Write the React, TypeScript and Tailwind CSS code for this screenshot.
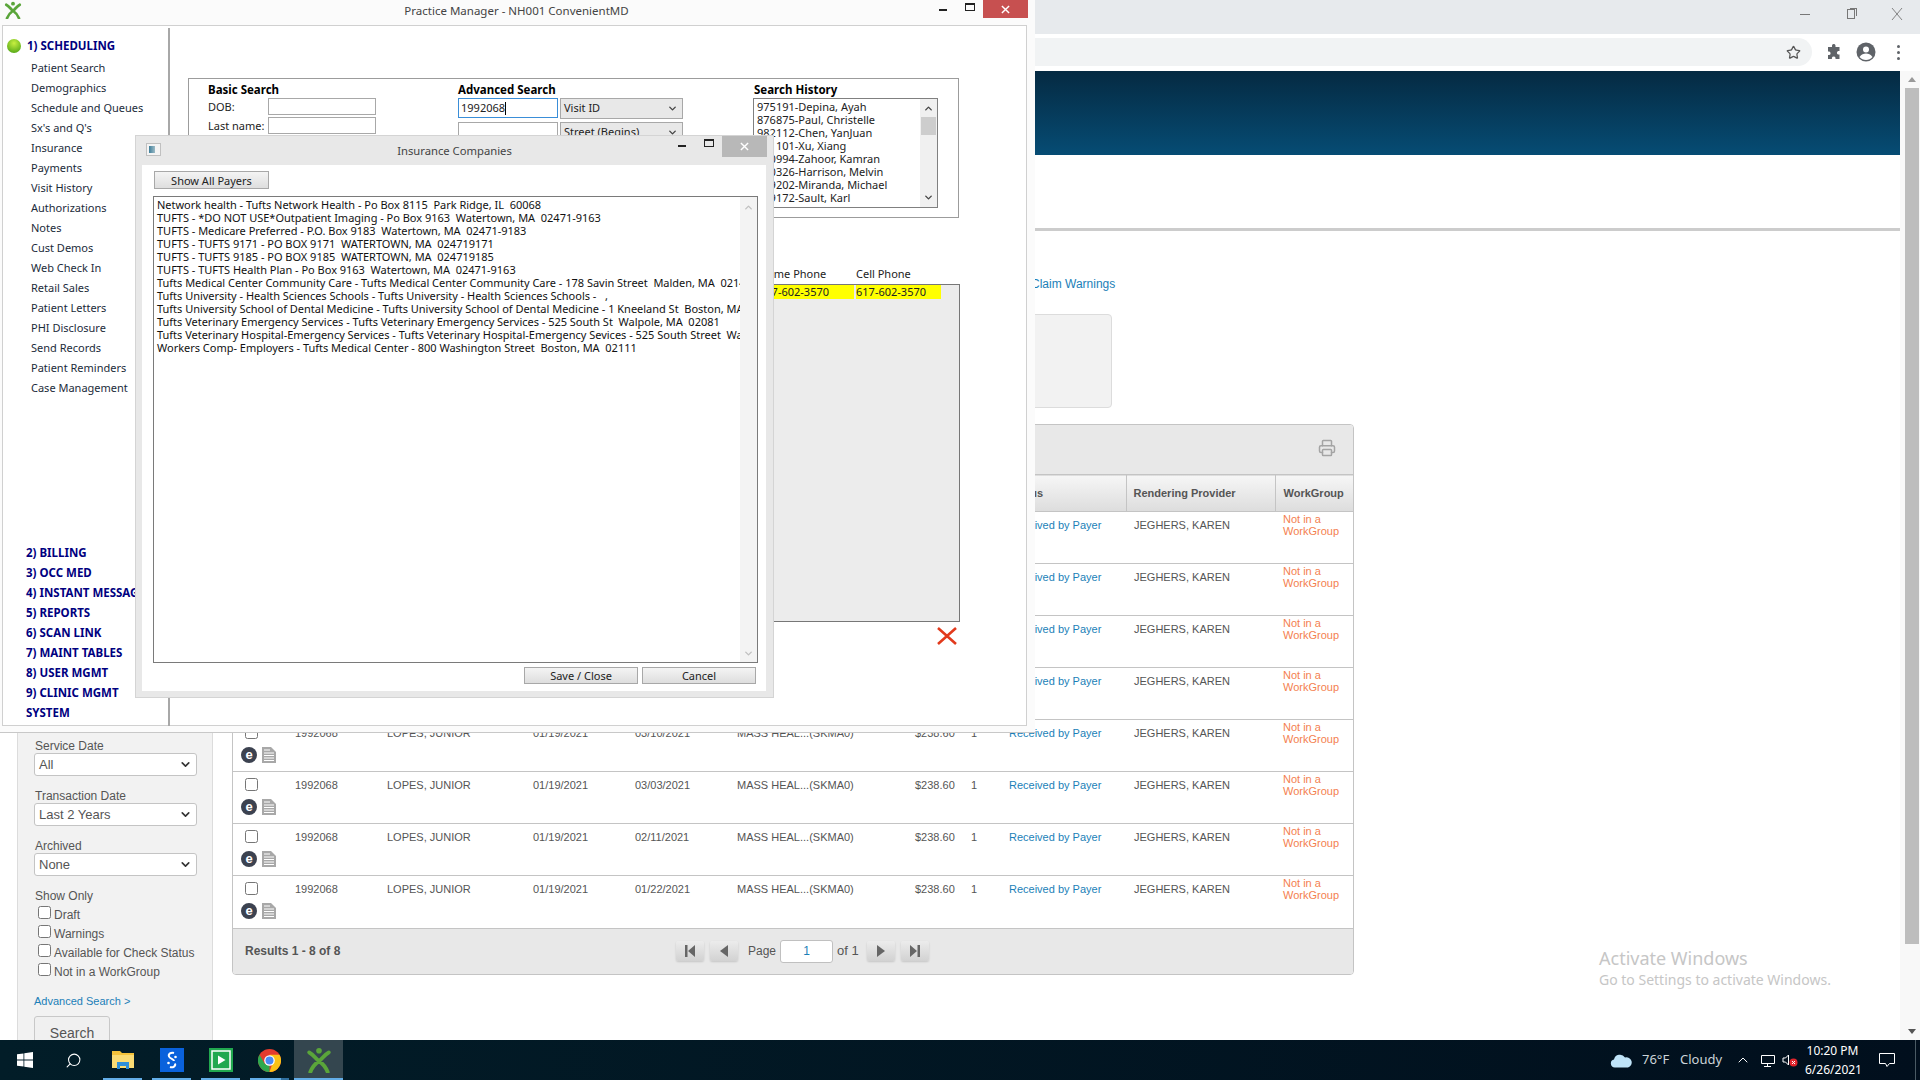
import React from 'react'
import { ChevronDown, ChevronUp, Printer, Star, Search, ChevronUp as Caret } from 'lucide-react'

const sideItems = [
  'Patient Search',
  'Demographics',
  'Schedule and Queues',
  "Sx's and Q's",
  'Insurance',
  'Payments',
  'Visit History',
  'Authorizations',
  'Notes',
  'Cust Demos',
  'Web Check In',
  'Retail Sales',
  'Patient Letters',
  'PHI Disclosure',
  'Send Records',
  'Patient Reminders',
  'Case Management',
]

const modules = [
  '2) BILLING',
  '3) OCC MED',
  '4) INSTANT MESSAGING',
  '5) REPORTS',
  '6) SCAN LINK',
  '7) MAINT TABLES',
  '8) USER MGMT',
  '9) CLINIC MGMT',
  'SYSTEM',
]

const history = [
  '975191-Depina, Ayah',
  '876875-Paul, Christelle',
  '982112-Chen, YanJuan',
  '981101-Xu, Xiang',
  '980994-Zahoor, Kamran',
  '980326-Harrison, Melvin',
  '979202-Miranda, Michael',
  '979172-Sault, Karl',
]

const payers = [
  'Network health - Tufts Network Health - Po Box 8115  Park Ridge, IL  60068',
  'TUFTS - *DO NOT USE*Outpatient Imaging - Po Box 9163  Watertown, MA  02471-9163',
  'TUFTS - Medicare Preferred - P.O. Box 9183  Watertown, MA  02471-9183',
  'TUFTS - TUFTS 9171 - PO BOX 9171  WATERTOWN, MA  024719171',
  'TUFTS - TUFTS 9185 - PO BOX 9185  WATERTOWN, MA  024719185',
  'TUFTS - TUFTS Health Plan - Po Box 9163  Watertown, MA  02471-9163',
  'Tufts Medical Center Community Care - Tufts Medical Center Community Care - 178 Savin Street  Malden, MA  02148',
  'Tufts University - Health Sciences Schools - Tufts University - Health Sciences Schools -   ,',
  'Tufts University School of Dental Medicine - Tufts University School of Dental Medicine - 1 Kneeland St  Boston, MA  02111',
  'Tufts Veterinary Emergency Services - Tufts Veterinary Emergency Services - 525 South St  Walpole, MA  02081',
  'Tufts Veterinary Hospital-Emergency Services - Tufts Veterinary Hospital-Emergency Sevices - 525 South Street  Walpole, MA  02081',
  'Workers Comp- Employers - Tufts Medical Center - 800 Washington Street  Boston, MA  02111',
]

const serviceDates = [
  '06/15/2021',
  '05/20/2021',
  '04/22/2021',
  '04/01/2021',
  '03/10/2021',
  '03/03/2021',
  '02/11/2021',
  '01/22/2021',
]

const headers = ['', 'Visit ID', 'Patient', 'Visit Date', 'Service Date', 'Payer', 'Amount', '', 'Status', 'Rendering Provider', 'WorkGroup']
const colWidths = ['w-[55px]', 'w-[92px]', 'w-[146px]', 'w-[102px]', 'w-[102px]', 'w-[178px]', 'w-[56px]', 'w-[38px]', 'w-[124px]', 'w-[149px]', 'w-[78px]']

function XLogo({ className }: { className: string }) {
  return (
    <svg viewBox="0 0 24 24" className={className} fill="none">
      <circle cx="12" cy="3.5" r="2.6" fill="#5aa53a" />
      <path d="M3 5c4 2 6 6 9 8 3-2 5-6 9-8M4 23c2-5 5-8 8-10 3 2 6 5 8 10" stroke="#5aa53a" strokeWidth="3.6" strokeLinecap="round" />
    </svg>
  )
}

function MinMax() {
  return (
    <div className="flex items-start gap-[18px]">
      <span className="mt-[9px] block h-[2px] w-[8px] bg-[#222]" />
      <span className="mt-[3px] block h-[8px] w-[10px] border border-t-2 border-[#222]" />
    </div>
  )
}

function WinCloseGlyph() {
  return (
    <svg viewBox="0 0 10 10" className="h-[9px] w-[9px]" stroke="white" strokeWidth="1.6">
      <path d="M1 1l8 8M9 1l-8 8" />
    </svg>
  )
}

function Sidebar() {
  return (
    <div className="mt-[2px] h-[698px] w-[167px] shrink-0 border-r-2 border-[#a8a8a8] pt-[8px]">
      <div className="flex h-[20px] items-center gap-[6px] pl-[4px] text-[11.5px] font-bold text-[#000080]">
        <span className="h-[14px] w-[14px] rounded-full bg-[radial-gradient(circle_at_50%_30%,#c8f040,#3f9a10)]" />
        1) SCHEDULING
      </div>
      <div className="mt-[2px] pl-[28px] text-[11px] text-[#1b2b3a]">
        {sideItems.map((item) => (
          <div key={item} className="flex h-[20px] items-center whitespace-nowrap">
            {item}
          </div>
        ))}
      </div>
      <div className="mt-[145px] pl-[23px] text-[11.5px] font-bold text-[#000080]">
        {modules.map((item) => (
          <div key={item} className="flex h-[20px] items-center whitespace-nowrap">
            {item}
          </div>
        ))}
      </div>
    </div>
  )
}

function WinSelect({ label }: { label: string }) {
  return (
    <div className="flex h-[21px] w-[123px] items-center justify-between border border-[#a8a8a8] bg-[#e8e8e8] pl-[3px] pr-[4px] text-[11px] text-[#222]">
      {label}
      <ChevronDown size={11} strokeWidth={3} className="text-[#444]" />
    </div>
  )
}

function SearchPanel() {
  return (
    <div className="ml-[18px] mt-[52px] flex h-[140px] w-[771px] border border-[#9c9c9c] pt-[2px] text-[11px] text-[#222]">
      <div className="ml-[19px] w-[250px]">
        <div className="h-[17px] text-[11.5px] font-bold leading-[17px] text-black">Basic Search</div>
        <div className="flex flex-col gap-[2px]">
          <div className="flex h-[17px] items-center">
            <span className="w-[60px] pt-[2px]">DOB:</span>
            <span className="h-[17px] w-[108px] border border-[#a8a8a8] bg-white" />
          </div>
          <div className="flex h-[17px] items-center">
            <span className="w-[60px] pt-[2px]">Last name:</span>
            <span className="h-[17px] w-[108px] border border-[#a8a8a8] bg-white" />
          </div>
        </div>
      </div>
      <div className="w-[296px]">
        <div className="h-[17px] text-[11.5px] font-bold leading-[17px] text-black">Advanced Search</div>
        <div className="flex flex-col gap-[3px]">
          <div className="flex gap-[2px]">
            <div className="flex h-[20px] w-[100px] items-center border border-[#3a8ed8] bg-white pl-[2px]">
              1992068
              <span className="h-[13px] w-px bg-black" />
            </div>
            <WinSelect label="Visit ID" />
          </div>
          <div className="flex gap-[2px]">
            <div className="h-[20px] w-[100px] border border-[#a8a8a8] bg-white" />
            <WinSelect label="Street (Begins)" />
          </div>
        </div>
      </div>
      <div>
        <div className="h-[17px] text-[11.5px] font-bold leading-[17px] text-black">Search History</div>
        <div className="-ml-px flex h-[110px] w-[185px] border border-[#808080]">
          <div className="flex-1 overflow-hidden pl-[3px] pt-[1px] leading-[13px]">
            {history.map((row) => (
              <div key={row} className="h-[13px] whitespace-nowrap">
                {row}
              </div>
            ))}
          </div>
          <div className="flex w-[17px] flex-col items-center bg-[#f0f0f0]">
            <ChevronUp size={11} strokeWidth={3} className="mt-[4px] text-[#444]" />
            <span className="mt-[3px] h-[18px] w-[15px] bg-[#cdcdcd]" />
            <ChevronDown size={11} strokeWidth={3} className="mb-[4px] mt-auto text-[#444]" />
          </div>
        </div>
      </div>
    </div>
  )
}

function ResultsPanel() {
  return (
    <div className="ml-[18px] mt-[49px] w-[772px] text-[11px] text-[#222]">
      <div className="flex h-[14px] items-center pl-[571px] leading-[14px]">
        <span className="w-[97px]">Home Phone</span>
        <span>Cell Phone</span>
      </div>
      <div className="mt-[3px] h-[338px] border border-[#777] bg-[#ececec]">
        <div className="ml-[570px] flex h-[14px] gap-[2px] leading-[13px] text-[#222]">
          <span className="w-[95px] bg-[#ffff00]">617-602-3570</span>
          <span className="w-[85px] bg-[#ffff00]">617-602-3570</span>
        </div>
      </div>
      <div className="mr-[3px] mt-[5px] flex justify-end">
        <svg viewBox="0 0 20 18" className="h-[18px] w-[20px]" stroke="#e23a1c" strokeWidth="2.6">
          <path d="M1 1l18 16M19 1L1 17" />
        </svg>
      </div>
    </div>
  )
}

function PracticeManager() {
  return (
    <div className="absolute left-0 top-0 h-[733px] w-[1035px] border-b border-[#c8c8c8] bg-[#fbfbfb]">
      <div className="relative flex h-[25px] items-center justify-center pl-[2px] text-[11.5px] text-[#444]">
        <XLogo className="absolute left-[4px] top-[1px] h-[18px] w-[18px]" />
        <span className="pb-[4px] pr-[4px]">Practice Manager - NH001 ConvenientMD</span>
        <div className="absolute left-[939px] top-0">
          <MinMax />
        </div>
        <div className="absolute left-[983px] top-0 flex h-[18px] w-[45px] items-center justify-center bg-[#c75050]">
          <WinCloseGlyph />
        </div>
      </div>
      <div className="ml-[2px] flex h-[701px] w-[1025px] border border-[#d0d0d0] bg-white">
        <Sidebar />
        <div className="min-w-0 flex-1">
          <SearchPanel />
          <ResultsPanel />
        </div>
      </div>
    </div>
  )
}

function InsuranceDialog() {
  return (
    <div className="absolute left-[135px] top-[135px] h-[563px] w-[639px] border border-[#d4d4d4] bg-[#e8e8e8] text-[11px] text-[#222]">
      <div className="relative flex h-[29px] items-center justify-center text-[11.25px] text-[#444]">
        <span className="absolute left-[10px] top-[7px] flex h-[13px] w-[15px] border border-[#c0c0c0] bg-[#f4f4f4] p-[2px]">
          <span className="h-full w-[6px] bg-[linear-gradient(90deg,#3f7f9a,#9cbac6)]" />
        </span>
        <span className="pt-[2px]">Insurance Companies</span>
        <div className="absolute left-[542px] top-0">
          <MinMax />
        </div>
        <div className="absolute left-[586px] top-0 flex h-[21px] w-[45px] items-center justify-center bg-[#b8b8b8]">
          <WinCloseGlyph />
        </div>
      </div>
      <div className="mx-[6px] h-[526px] w-[624px] bg-white pt-[6px]">
        <button className="ml-[12px] h-[18px] w-[115px] border border-[#a8a8a8] bg-[linear-gradient(#f4f4f4,#dedede)] text-[11px] leading-none">
          Show All Payers
        </button>
        <div className="ml-[11px] mt-[7px] flex h-[467px] w-[605px] border border-[#7a7a7a]">
          <div className="min-w-0 flex-1 overflow-hidden pl-[3px] pt-[1px] leading-[13px] tracking-[-0.015px] text-[#111]">
            {payers.map((row) => (
              <div key={row} className="h-[13px] whitespace-pre">
                {row}
              </div>
            ))}
          </div>
          <div className="flex w-[17px] flex-col items-center bg-[#f3f3f3] text-[#c0c0c0]">
            <ChevronUp size={11} strokeWidth={3} className="mt-[5px]" />
            <ChevronDown size={11} strokeWidth={3} className="mb-[3px] mt-auto" />
          </div>
        </div>
        <div className="mr-[10px] mt-[4px] flex justify-end gap-[4px]">
          <button className="h-[17px] w-[114px] border border-[#a8a8a8] bg-[linear-gradient(#f4f4f4,#dedede)] text-[11px] leading-none">
            Save / Close
          </button>
          <button className="h-[17px] w-[114px] border border-[#a8a8a8] bg-[linear-gradient(#f4f4f4,#dedede)] text-[11px] leading-none">
            Cancel
          </button>
        </div>
      </div>
    </div>
  )
}

function FilterSelect({ label, value }: { label: string; value: string }) {
  return (
    <div className="mb-[13px]">
      <div className="h-[14px] pl-[1px] text-[12px] leading-[14px] text-[#555]">{label}</div>
      <div className="flex h-[23px] w-[163px] items-center justify-between rounded-[3px] border border-[#c4c4c4] bg-white pl-[4px] pr-[4px] text-[13px] text-[#555]">
        {value}
        <ChevronDown size={13} strokeWidth={3} className="text-[#333]" />
      </div>
    </div>
  )
}

function FilterCheck({ label }: { label: string }) {
  return (
    <label className="flex h-[19px] items-start gap-[3px] pl-[4px] text-[12px] leading-[19px] text-[#555]">
      <input type="checkbox" readOnly className="mt-[1px]" />
      <span className="mt-[1px]">{label}</span>
    </label>
  )
}

function FiltersAside() {
  return (
    <aside className="ml-[17px] mt-[100px] w-[196px] shrink-0 border-x border-[#dcdcdc] bg-[#f2f2f2] pl-[16px] pt-[408px]">
      <FilterSelect label="Service Date" value="All" />
      <FilterSelect label="Transaction Date" value="Last 2 Years" />
      <FilterSelect label="Archived" value="None" />
      <div className="h-[14px] pl-[1px] text-[12px] font-medium leading-[14px] text-[#555]">Show Only</div>
      <div className="mt-[2px]">
        <FilterCheck label="Draft" />
        <FilterCheck label="Warnings" />
        <FilterCheck label="Available for Check Status" />
        <FilterCheck label="Not in a WorkGroup" />
      </div>
      <div className="mt-[13px] text-[11px] leading-[14px] text-[#1b7fb8]">Advanced Search &gt;</div>
      <button className="mt-[8px] h-[32px] w-[76px] rounded-[3px] border border-[#c8c8c8] bg-[#f0f0f0] pt-[2px] text-[14px] text-[#555]">
        Search
      </button>
    </aside>
  )
}

function DocIcon() {
  return (
    <svg viewBox="0 0 14 16" className="h-[16px] w-[14px]">
      <path d="M0 0h9l5 5v11H0z" fill="#a8a8a8" />
      <path d="M2 3h6M2 6h10M2 8.5h10M2 11h10M2 13.5h10" stroke="white" strokeWidth="1" />
    </svg>
  )
}

function ClaimsTable() {
  return (
    <div className="relative w-[1122px] overflow-hidden rounded-[4px] border border-[#c4c4c4] text-[11px] text-[#555]">
      <div className="flex h-[49px] items-start justify-end bg-[#e8e8e8] pr-[17px] pt-[14px]">
        <Printer size={18} strokeWidth={2} className="text-[#a4a4a4]" />
      </div>
      <table className="w-full table-fixed border-collapse">
        <thead>
          <tr className="h-[37px] border-y border-[#c4c4c4] bg-[linear-gradient(#f6f6f6,#dddddd)] text-left font-bold">
            {headers.map((title, i) => (
              <th key={i} className={`${colWidths[i]} border-r border-[#c4c4c4] pl-[7px] text-[11px] last:border-r-0 last:pl-[8px]`}>
                {title}
              </th>
            ))}
          </tr>
        </thead>
        <tbody>
          {serviceDates.map((date) => (
            <tr key={date} className="h-[52px] border-b border-[#c4c4c4] align-top leading-[13px] last:border-b-0">
              <td className="pl-[8px] pt-[6px]">
                <input type="checkbox" readOnly className="ml-[4px] block" />
                <div className="mt-[8px] flex gap-[5px]">
                  <span className="flex h-[16px] w-[16px] items-center justify-center rounded-full bg-[#3c4250] pb-[1px] text-[13px] font-bold leading-none text-white">
                    e
                  </span>
                  <DocIcon />
                </div>
              </td>
              <td className="pl-[7px] pt-[7px]">1992068</td>
              <td className="pl-[7px] pt-[7px]">LOPES, JUNIOR</td>
              <td className="pl-[7px] pt-[7px]">01/19/2021</td>
              <td className="pl-[7px] pt-[7px]">{date}</td>
              <td className="pl-[7px] pt-[7px]">MASS HEAL...(SKMA0)</td>
              <td className="pl-[7px] pt-[7px]">$238.60</td>
              <td className="pl-[7px] pt-[7px]">1</td>
              <td className="pl-[7px] pt-[7px] text-[#1b7fb8]">Received by Payer</td>
              <td className="pl-[8px] pt-[7px]">JEGHERS, KAREN</td>
              <td className="pl-[8px] pt-[1px] leading-[12px] text-[#f47f50]">
                Not in a
                <br />
                WorkGroup
              </td>
            </tr>
          ))}
        </tbody>
      </table>
      <div className="flex h-[46px] items-center border-t border-[#c4c4c4] bg-[#e8e8e8] pl-[12px]">
        <span className="w-[431px] text-[12px] font-bold text-[#555]">Results 1 - 8 of 8</span>
        <div className="flex items-center">
          <PagerButton dir="first" />
          <PagerButton dir="prev" className="ml-[6px]" />
          <span className="ml-[10px] text-[12px]">Page</span>
          <span className="ml-[4px] flex h-[23px] w-[53px] items-center justify-center rounded-[3px] border border-[#c0c0c0] bg-white text-[12px] text-[#1b7fb8]">
            1
          </span>
          <span className="ml-[4px] w-[23px] text-[13px] font-medium">of 1</span>
          <PagerButton dir="next" className="ml-[7px]" />
          <PagerButton dir="last" className="ml-[6px]" />
        </div>
      </div>
    </div>
  )
}

function PagerButton({ dir, className = '' }: { dir: 'first' | 'prev' | 'next' | 'last'; className?: string }) {
  const paths = {
    first: 'M3 2h2.5v12H3zM13 2v12L6 8z',
    prev: 'M12 2v12L4 8z',
    next: 'M4 2v12l8-6z',
    last: 'M3 2v12l7-6zM10.5 2H13v12h-2.5z',
  }
  return (
    <span className={`flex h-[20px] w-[28px] items-center justify-center rounded-[2px] bg-[linear-gradient(#ececec,#d2d2d2)] shadow-[0_1px_2px_rgba(0,0,0,0.15)] ${className}`}>
      <svg viewBox="0 0 16 16" className="h-[16px] w-[16px]" fill="#666">
        <path d={paths[dir]} />
      </svg>
    </span>
  )
}

function ChromeBar() {
  return (
    <>
      <div className="flex h-[34px] items-start justify-end bg-[#e7eaed] text-[#777]">
        <span className="mr-[37px] mt-[14px] h-px w-[10px] bg-[#777]" />
        <span className="relative mr-[36px] mt-[9px] h-[10px] w-[8px] border border-[#777]">
          <span className="absolute -right-[3px] -top-[2px] h-[8px] w-[7px] border-r border-t border-[#777]" />
        </span>
        <svg viewBox="0 0 12 12" className="mr-[17px] mt-[8px] h-[12px] w-[12px]" stroke="#777" strokeWidth="0.9">
          <path d="M1 0l10 12M11 0L1 12" />
        </svg>
      </div>
      <div className="flex h-[37px] items-center bg-white pb-[1px]">
        <div className="flex h-[28px] w-[1812px] items-center justify-end rounded-r-[14px] bg-[#f1f3f4] pr-[11px]">
          <Star size={15} strokeWidth={2} className="text-[#555]" />
        </div>
        <svg viewBox="0 0 16 16" className="ml-[14px] h-[16px] w-[16px]" fill="#5f6368">
          <path d="M6 1.5a1.8 1.8 0 0 1 3.5 0V3h4v4h-1.3a1.9 1.9 0 0 0 0 3.6H13.500V15H9.500v-1.300a1.900 1.900 0 0 0-3.600 0V15H2v-4h1.300a1.900 1.900 0 0 0 0-3.600H2V3h4z" />
        </svg>
        <svg viewBox="0 0 20 20" className="ml-[14px] h-[20px] w-[20px]">
          <circle cx="10" cy="10" r="9.500" fill="#5f6368" />
          <circle cx="10" cy="7.500" r="3" fill="white" />
          <path d="M3.500 15c2-3 4-3.500 6.500-3.500s4.500.5 6.500 3.500c-1.500 2-4 3-6.500 3s-5-1-6.500-3z" fill="white" />
        </svg>
        <div className="ml-[21px] flex flex-col gap-[3px]">
          <span className="h-[3px] w-[3px] rounded-full bg-[#5f6368]" />
          <span className="h-[3px] w-[3px] rounded-full bg-[#5f6368]" />
          <span className="h-[3px] w-[3px] rounded-full bg-[#5f6368]" />
        </div>
      </div>
    </>
  )
}

function PageScrollbar() {
  return (
    <div className="flex w-[20px] shrink-0 flex-col items-center bg-[#f8f8f8] pl-[3px]">
      <span className="mt-[6px] h-0 w-0 border-x-[4px] border-b-[5px] border-x-transparent border-b-[#999]" />
      <span className="mt-[6px] h-[856px] w-[14px] bg-[#bdbdbd]" />
      <span className="mb-[6px] mt-auto h-0 w-0 border-x-[4px] border-t-[5px] border-x-transparent border-t-[#555]" />
    </div>
  )
}

function TaskCell({ active, running, stacked, children }: { active?: boolean; running?: boolean; stacked?: boolean; children: React.ReactNode }) {
  return (
    <div className={`relative flex h-[40px] w-[49px] items-center justify-center ${active ? 'bg-[#34464f]' : ''}`}>
      {children}
      {running && <span className={`absolute bottom-0 h-[2px] bg-[#63aee8] ${active ? 'inset-x-0' : 'inset-x-[5px]'}`} />}
      {stacked && <span className="absolute bottom-0 right-[5px] h-[2px] w-[8px] bg-[#2f6f9f]" />}
    </div>
  )
}

function Taskbar() {
  return (
    <div className="flex h-[40px] items-center bg-[linear-gradient(90deg,#021d28,#010f1d)] text-white">
      <TaskCell>
        <svg viewBox="0 0 16 16" className="h-[16px] w-[16px]" fill="white">
          <path d="M0 2.300l6.500-.9v6.200H0zM7.300 1.300L16 0v7.600H7.300zM0 8.400h6.500v6.200L0 13.700zM7.300 8.400H16V16l-8.700-1.200z" />
        </svg>
      </TaskCell>
      <TaskCell>
        <Search size={17} strokeWidth={1.5} className="-scale-x-100 text-white" />
      </TaskCell>
      <TaskCell running>
        <svg viewBox="0 0 22 20" className="h-[20px] w-[22px]">
          <path d="M0 1h8l2 2h12v15H0z" fill="#f5c33b" />
          <path d="M0 5h22v13H0z" fill="#fbdc74" />
          <path d="M5 12h12v7h-3v-3H8v3H5z" fill="#2f8fd8" />
        </svg>
      </TaskCell>
      <TaskCell running>
        <svg viewBox="0 0 24 24" className="h-[24px] w-[24px]">
          <rect width="24" height="24" fill="#0a62dc" />
          <path d="M14 5c-3-1-6 1-5 3.500S14 11 14 13M10 19c3 1 6-1 5-3.500" stroke="white" strokeWidth="2" fill="none" />
          <circle cx="15.500" cy="9" r="1.300" fill="white" />
          <circle cx="8.500" cy="15" r="1.300" fill="white" />
        </svg>
      </TaskCell>
      <TaskCell running>
        <svg viewBox="0 0 24 24" className="h-[24px] w-[24px]">
          <rect width="24" height="24" fill="#21a84f" />
          <rect x="3" y="3" width="18" height="18" fill="none" stroke="white" strokeWidth="1.500" />
          <path d="M9 7.500v9l7.500-4.500z" fill="white" />
        </svg>
      </TaskCell>
      <TaskCell running stacked>
        <svg viewBox="0 0 24 24" className="h-[23px] w-[23px]">
          <circle cx="12" cy="12" r="12" fill="#e33b2e" />
          <path d="M12 24A12 12 0 0 1 1.600 6L7 15.500 12 17z" fill="#2da94f" />
          <path d="M12 24A12 12 0 0 0 22.400 6H12l4 6.500z" fill="#fbc116" />
          <circle cx="12" cy="12" r="5.500" fill="white" />
          <circle cx="12" cy="12" r="4.200" fill="#4a8af4" />
        </svg>
      </TaskCell>
      <TaskCell active running>
        <XLogo className="h-[26px] w-[26px]" />
      </TaskCell>
      <div className="ml-auto flex items-center text-[12px] font-['Noto_Sans',sans-serif]">
        <svg viewBox="0 0 22 14" className="h-[15px] w-[22px]">
          <path d="M5 14a4 4 0 0 1-1-7.900A6 6 0 0 1 15 4a5 5 0 0 1 3 10z" fill="#bfe3f8" />
        </svg>
        <span className="ml-[10px] w-[36px] text-[13px] text-[#ccd4d8]">76°F</span>
        <span className="ml-[2px] w-[52px] text-[13px] text-[#ccd4d8]">Cloudy</span>
        <Caret size={16} strokeWidth={1.5} className="ml-[3px]" />
        <svg viewBox="0 0 16 14" fill="none" stroke="white" className="ml-[8px] h-[14px] w-[16px]">
          <path d="M2.500 2.500h13v8h-13zM8.500 10.500v3M5 13.500h7" />
        </svg>
        <svg viewBox="0 0 16 14" className="ml-[7px] h-[14px] w-[16px]">
          <path d="M1 5h2.500l3-3v10l-3-3H1z" fill="none" stroke="white" />
          <circle cx="11.500" cy="9.500" r="4" fill="#e0242c" />
          <path d="M10 8l3 3M13 8l-3 3" stroke="white" />
        </svg>
        <div className="ml-[7px] w-[55px] text-center text-[12px] leading-[19px]">
          <div>10:20 PM</div>
          <div>6/26/2021</div>
        </div>
        <svg viewBox="0 0 16 14" fill="none" stroke="white" className="ml-[19px] h-[14px] w-[16px]">
          <path d="M.5.500h15v10h-5L8 13.500 6.500 10.500h-6z" />
        </svg>
        <span className="ml-[20px] h-[40px] w-[5px] border-l border-[#4a5a64]" />
      </div>
    </div>
  )
}

export default function App() {
  return (
    <div className="relative h-[1080px] w-[1920px] overflow-hidden bg-white font-['Liberation_Sans',Arial,sans-serif]">
      <div className="flex h-[1040px] flex-col">
        <ChromeBar />
        <div className="flex min-h-0 flex-1">
          <div className="min-w-0 flex-1">
            <div className="h-[84px] bg-[linear-gradient(#052a42,#064c74)]" />
            <div className="h-[73px]" />
            <div className="h-[3px] bg-[#cccccc]" />
            <div className="flex h-[809px] overflow-hidden">
              <FiltersAside />
              <div className="ml-[19px]">
                <div className="pl-[799px] pt-[46px] text-[12px] leading-[14px] text-[#1b7fb8]">Claim Warnings</div>
                <div className="ml-[79px] mt-[23px] h-[94px] w-[801px] rounded-[4px] border border-[#dcdcdc] bg-[#f2f2f2]" />
                <div className="mt-[16px]">
                  <ClaimsTable />
                </div>
              </div>
            </div>
          </div>
          <PageScrollbar />
        </div>
      </div>
      <Taskbar />
      <div className="absolute left-[1599px] top-[946px] text-[#c6c6c6] font-['Noto_Sans',sans-serif]">
        <div className="text-[18px] leading-[24px]">Activate Windows</div>
        <div className="text-[14px] leading-[20px]">Go to Settings to activate Windows.</div>
      </div>
      <div className="font-['Noto_Sans',sans-serif]">
        <PracticeManager />
        <InsuranceDialog />
      </div>
    </div>
  )
}
